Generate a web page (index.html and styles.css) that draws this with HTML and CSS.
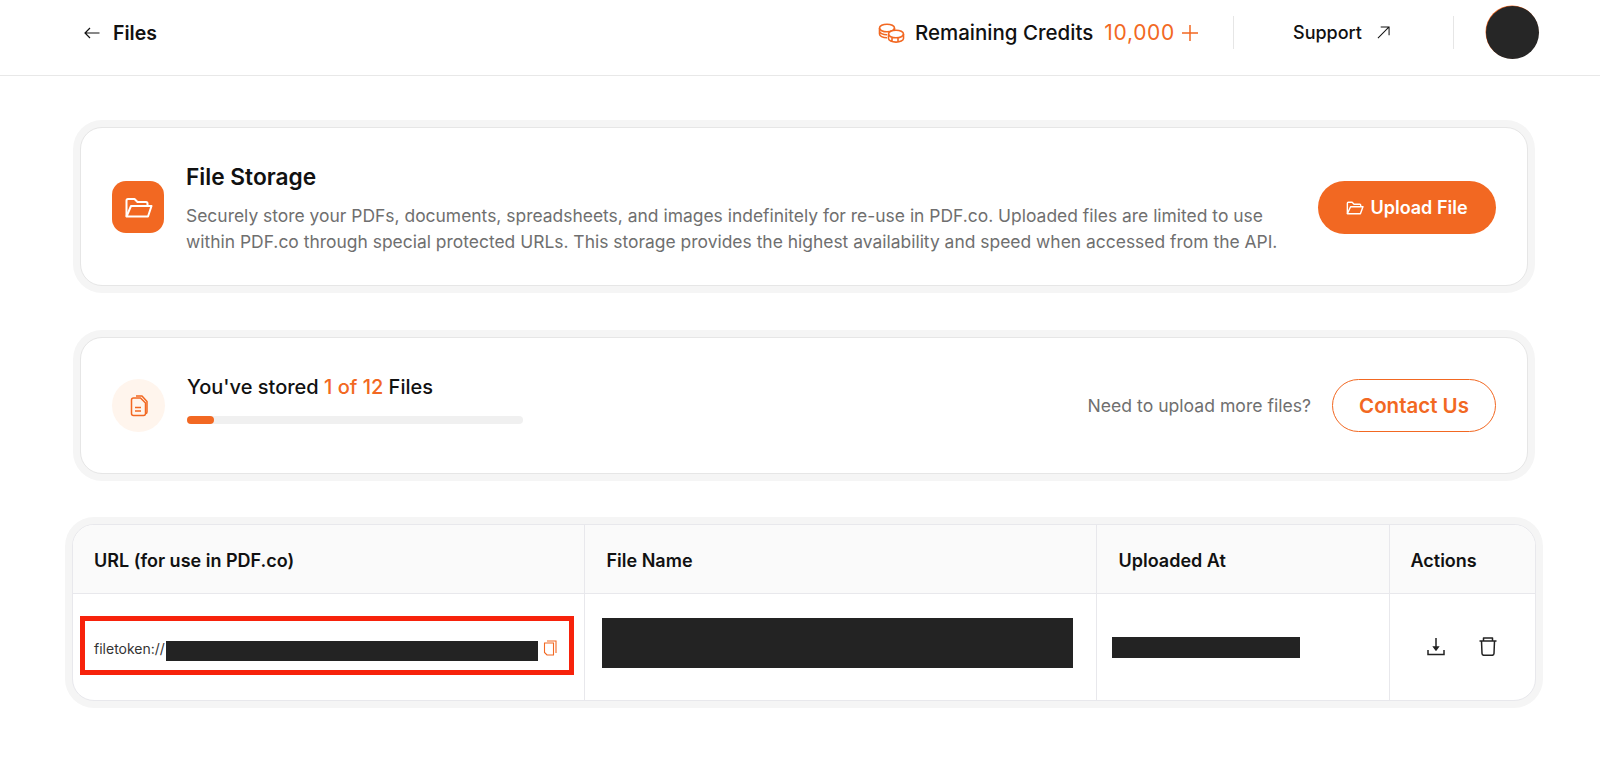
FILE: index.html
```html
<!DOCTYPE html>
<html lang="en">
<head>
<meta charset="utf-8">
<title>Files</title>
<link rel="stylesheet" href="styles.css">
</head>
<body>
<header class="topbar">
  <div class="back">
    <svg class="back-icon" width="16" height="12" viewBox="0 0 16 12" fill="none" stroke="#111" stroke-width="1.2"><path d="M15.5 6H1M6 1 1 6l5 5"/></svg>
    <span class="page-name">Files</span>
  </div>
  <div class="top-right">
    <div class="credits">
      <svg class="coins" width="27" height="20" viewBox="0 0 27 20" fill="none" stroke="#f26822" stroke-width="1.6"><ellipse cx="9" cy="5" rx="7.5" ry="3.800"/><path d="M1.500 5v6c0 2 3 3.800 7.500 3.800M1.500 8c0 2 3 3.800 7.500 3.800M16.500 5v2.500"/><ellipse cx="18" cy="11" rx="7.500" ry="3.800" fill="#fff"/><path d="M10.500 11v4.500c0 2 3.400 3.600 7.500 3.600s7.500-1.600 7.500-3.600V11M14 15v4M20 15v4"/></svg>
      <span class="credits-label">Remaining Credits</span>
      <span class="credits-value">10,000</span>
      <svg class="plus" width="16" height="16" viewBox="0 0 16 16" stroke="#f26822" stroke-width="1.500"><path d="M8 0v16M0 8h16"/></svg>
    </div>
    <div class="top-sep"></div>
    <div class="support">
      <span>Support</span>
      <svg width="13" height="13" viewBox="0 0 14 14" fill="none" stroke="#111" stroke-width="1.100"><path d="M1 13 13 1M4 1h9v9"/></svg>
    </div>
    <div class="top-sep"></div>
    <div class="avatar"></div>
  </div>
</header>

<main class="page">
  <section class="card card-storage">
    <div class="storage-icon">
      <svg class="folder" width="28" height="20" viewBox="0 0 28 20" fill="none" stroke="#fff" stroke-width="2" stroke-linejoin="round"><path d="M1.500 18.500V2.500C1.500 1.500 2 1 3 1h6.500l3 3H21c1 0 1.500.6 1.500 1.500V8"/><path d="M1.500 18.500H23L26.500 8H6L1.500 18.500Z"/></svg>
    </div>
    <div class="storage-text">
      <h1 class="title">File Storage</h1>
      <p class="desc">Securely store your PDFs, documents, spreadsheets, and images indefinitely for re-use in PDF.co. Uploaded files are limited to use<br>within PDF.co through special protected URLs. This storage provides the highest availability and speed when accessed from the API.</p>
    </div>
    <button class="btn btn-solid">
      <svg width="18" height="14" viewBox="0 0 28 22" fill="none" stroke="#fff" stroke-width="2.200" stroke-linejoin="round"><path d="M2 20V3.500C2 2.500 2.600 2 3.500 2h6l3 3h9c1 0 1.500.6 1.500 1.500V9"/><path d="M2 20h20.500L26.500 9H7L2 20Z"/></svg>
      Upload File
    </button>
  </section>

  <section class="card card-usage">
    <div class="usage-icon">
      <svg width="20" height="22" viewBox="0 0 20 22" fill="none" stroke="#f26822" stroke-width="1.500" stroke-linejoin="round"><path d="M7 1h6l5 5.500V17c0 1-.6 1.500-1.500 1.500"/><path d="M4.500 3h7l5 5v10.500c0 1.200-.8 2-2 2h-10c-1.200 0-2-.8-2-2v-13.500c0-1 .8-2 2-2Z" fill="#fff5ed"/><path d="M6 12.500h6M6 16h6"/></svg>
    </div>
    <div class="usage-main">
      <div class="usage-title">You've stored <span class="accent">1 of 12</span> Files</div>
      <div class="track"><div class="fill" style="width:8%"></div></div>
    </div>
    <span class="usage-note">Need to upload more files?</span>
    <button class="btn btn-outline">Contact Us</button>
  </section>

  <section class="table-wrap">
    <table class="files">
      <colgroup>
        <col class="col-url"><col class="col-name"><col class="col-date"><col class="col-actions">
      </colgroup>
      <thead>
        <tr><th>URL (for use in PDF.co)</th><th>File Name</th><th>Uploaded At</th><th>Actions</th></tr>
      </thead>
      <tbody>
        <tr>
          <td class="cell-url">
            <div class="url-box">
              <span class="url-text">filetoken://</span>
              <span class="redact redact-url"></span>
              <svg class="copy" width="14" height="16" viewBox="0 0 14 16" fill="none" stroke="#f26822" stroke-width="1.100"><path d="M4 1h9v12"/><path d="M1.500 3h9v12H4L1.500 12.500V3Z"/></svg>
            </div>
          </td>
          <td class="cell-name"><div class="redact redact-name"></div></td>
          <td class="cell-date"><div class="redact redact-date"></div></td>
          <td class="cell-actions">
            <div class="actions">
              <svg width="18" height="18" viewBox="0 0 18 18" fill="none" stroke="#222" stroke-width="1.500"><path d="M9 0v11"/><path d="M6.800 9 9 12l2.200-3Z" fill="#222"/><path d="M1 12v4.500h16V12"/></svg>
              <svg width="18" height="19" viewBox="0 0 18 19" fill="none" stroke="#222" stroke-width="1.500" stroke-linejoin="round"><path d="M0.500 4h17"/><path d="M4.500 4V1h9v3"/><path d="M2.500 4 3 16.500c.1 1.200.8 1.800 2 1.800h8c1.200 0 1.900-.6 2-1.800L15.500 4"/></svg>
            </div>
          </td>
        </tr>
      </tbody>
    </table>
  </section>
</main>
</body>
</html>
```

FILE: styles.css
```css
* { box-sizing: border-box; }
html, body { margin: 0; padding: 0; }
body {
  font-family: "Inter", "Lato", sans-serif;
  color: #111;
  background: #fff;
  height: 767px;
  overflow: hidden;
}
.topbar {
  height: 76px;
  border-bottom: 1px solid #e8e8e8;
  display: flex;
  align-items: center;
  justify-content: space-between;
  padding: 0 61px 10px 84px;
}
.back { display: flex; align-items: center; gap: 13px; }
.page-name { font-size: 19.500px; font-weight: 600; }
.top-right { display: flex; align-items: center; }
.credits { display: flex; align-items: center; font-size: 20.500px; font-weight: 500; }
.coins { margin-right: 10px; }
.credits-label { margin-right: 11px; }
.credits-value { color: #f26822; font-weight: 400; font-size: 21px; letter-spacing: 0.700px; margin-right: 7px; }
.top-sep { width: 1px; height: 33px; background: #e6e6e6; }
.credits + .top-sep { margin-left: 35px; }
.support { display: flex; align-items: center; gap: 15px; font-size: 18px; font-weight: 500; margin: 0 63px 0 59px; }
.avatar {
  width: 53px; height: 53px; border-radius: 50%;
  background: #262626;
  margin-left: 32px;
  box-shadow: -0.500px -0.500px 0 #f26822;
}
.page { padding: 51px 72px 0 80px; }
.card {
  background: #fff;
  border: 1px solid #e6e6e6;
  border-radius: 22px;
  box-shadow: 0 0 0 7px #f5f5f5;
  display: flex;
  align-items: center;
}
.card-storage { height: 159px; padding: 0 31px 0 31px; }
.storage-icon {
  width: 52px; height: 52px; border-radius: 14px;
  background: #f26822;
  display: flex; align-items: center; justify-content: center;
  flex: none;
}
.folder { margin: 2px 0 0 2px; }
.storage-text { margin-left: 22px; padding-top: 3px; flex: 1; }
.title { margin: 0 0 11px; font-size: 22.700px; font-weight: 600; line-height: 30px; color: #111; }
.desc { margin: 0; font-size: 17.450px; line-height: 26px; color: #6f6f6f; white-space: nowrap; }
.btn {
  font-family: inherit;
  height: 53px;
  border-radius: 27px;
  font-size: 18px;
  font-weight: 600;
  display: flex; align-items: center; justify-content: center;
  flex: none;
  cursor: pointer;
}
.btn-solid { width: 178px; background: #f26822; color: #fff; border: 0; gap: 6px; margin-top: 2px; }
.btn-outline { width: 164px; background: #fff; color: #f26822; border: 1px solid #f26822; font-size: 20.500px; }
.card-usage { height: 137px; margin-top: 51px; padding: 0 31px 0 31px; }
.usage-icon {
  width: 53px; height: 53px; border-radius: 50%;
  background: #fff5ed;
  display: flex; align-items: center; justify-content: center;
  flex: none;
}
.usage-main { margin-left: 22px; width: 336px; margin-right: auto; padding-bottom: 14px; }
.usage-title { font-size: 20px; font-weight: 500; line-height: 26px; }
.accent { color: #f26822; }
.track { height: 8px; border-radius: 4px; background: #f0f0f0; margin-top: 16px; }
.fill { height: 8px; border-radius: 4px; background: #f26822; }
.usage-note { font-size: 17.600px; color: #6f6f6f; margin-right: 21px; }
.table-wrap {
  margin: 50px -8px 0 -8px;
  border: 1px solid #e8e8ec;
  border-radius: 22px;
  box-shadow: 0 0 0 7px #f5f5f5;
  overflow: hidden;
  background: #fff;
}
.files { width: 100%; border-collapse: collapse; table-layout: fixed; }
.col-url { width: 511px; }
.col-name { width: 512px; }
.col-date { width: 293px; }
.files th {
  height: 68px;
  background: #fafafa;
  text-align: left;
  font-size: 18px;
  font-weight: 600;
  padding: 3px 0 0 21px;
  border-bottom: 1px solid #e8e8ec;
  border-right: 1px solid #e8e8ec;
}
.files th:nth-child(2), .files th:nth-child(3) { padding-left: 22px; }
.files th:last-child, .files td:last-child { border-right: 0; }
.files td {
  height: 107px;
  padding: 0;
  border-right: 1px solid #e8e8ec;
  vertical-align: middle;
}
.url-box {
  width: 494px; height: 59px;
  margin: -2px 0 0 7px;
  border: 5px solid #f7220b;
  display: flex; align-items: center;
  padding: 10px 0 0 9px;
  box-sizing: border-box;
}
.url-text { font-size: 14px; color: #333; margin-bottom: 4px; }
.redact { background: #232323; display: block; }
.redact-url { width: 372px; height: 20px; margin-left: 1px; }
.copy { margin-left: 5px; margin-top: -5px; }
.redact-name { width: 471px; height: 50px; margin: -7px 0 0 17px; }
.redact-date { width: 188px; height: 21px; margin-left: 15px; margin-top: 2px; }
.actions { display: flex; align-items: center; gap: 34px; padding-left: 37px; }
```
